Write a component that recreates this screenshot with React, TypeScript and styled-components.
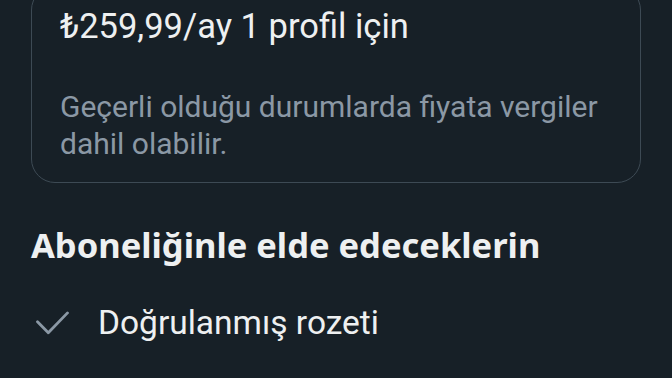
import styled, { createGlobalStyle } from 'styled-components';

const GlobalStyle = createGlobalStyle`
  html, body {
    margin: 0;
    padding: 0;
    background-color: #172027;
    overflow: hidden;
  }
`;

const Page = styled.div`
  width: 672px;
  height: 378px;
  box-sizing: border-box;
  padding: 0 31px;
  background-color: #172027;
  font-family: Roboto, 'Noto Sans', sans-serif;
  color: #e7e9ea;
  overflow: hidden;
`;

const PriceCard = styled.div`
  margin-top: -14px;
  box-sizing: border-box;
  border: 1.5px solid #3d4a54;
  border-radius: 24px;
  padding: 19px 28px 20px;
`;

const Price = styled.div`
  font-size: 34.5px;
  line-height: 40px;
  color: #eef0f1;
`;

const TaxNote = styled.div`
  margin-top: 42px;
  font-size: 30px;
  line-height: 37px;
  color: #8b98a5;
`;

const Heading = styled.h2`
  margin: 40px 0 0;
  font-family: 'Noto Sans', sans-serif;
  font-weight: 700;
  font-size: 34.5px;
  line-height: 44px;
  color: #eef0f1;
`;

const FeatureList = styled.ul`
  list-style: none;
  margin: 36px 0 0;
  padding: 0;
`;

const Feature = styled.li`
  display: flex;
  align-items: center;
  gap: 29px;
  font-size: 33.5px;
  line-height: 40px;
  color: #eef0f1;
`;

const CheckIcon = styled.svg`
  width: 33px;
  height: 24px;
  flex-shrink: 0;
  margin-left: 5px;
`;

export default function App() {
  return (
    <>
      <GlobalStyle />
      <Page>
        <PriceCard>
          <Price>₺259,99/ay 1 profil için</Price>
          <TaxNote>Geçerli olduğu durumlarda fiyata vergiler dahil olabilir.</TaxNote>
        </PriceCard>
        <Heading>Aboneliğinle elde edeceklerin</Heading>
        <FeatureList>
          <Feature>
            <CheckIcon viewBox="0 0 33 24" fill="none">
              <path
                d="M1.5 10.7 L12.3 21.8 L31.5 1.9"
                stroke="#8b98a5"
                strokeWidth="2.8"
                strokeLinecap="round"
                strokeLinejoin="round"
              />
            </CheckIcon>
            Doğrulanmış rozeti
          </Feature>
        </FeatureList>
      </Page>
    </>
  );
}
